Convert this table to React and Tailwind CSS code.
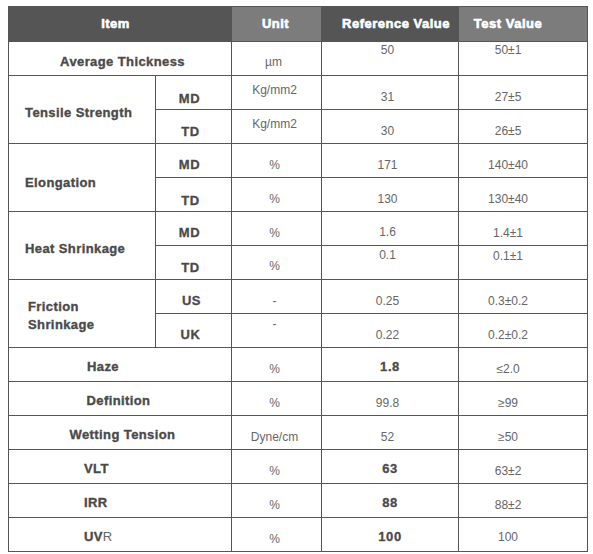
import React from "react";

// Film spec table: header + 15 property rows, 34px each
const td = "border border-[#555] p-0 align-top";
const val = "font-['Liberation_Sans',Arial,sans-serif] text-[12px] leading-[14px] text-[#666] text-center";
const lab = "font-['Liberation_Sans',Arial,sans-serif] font-bold text-[13px] leading-[14px] tracking-[0.4px] text-[#4a4a4a] [-webkit-text-stroke:0.35px_#4a4a4a]";
const bold = "font-['Liberation_Sans',Arial,sans-serif] font-bold text-[13px] leading-[14px] tracking-[0.6px] text-[#4a4a4a] [-webkit-text-stroke:0.3px_#4a4a4a] text-center";
const th = "border border-[#555] p-0 align-middle text-white font-['Liberation_Sans',Arial,sans-serif] font-bold text-[13px] leading-[14px] tracking-[0.5px] [-webkit-text-stroke:0.6px_white]";

export default function App() {
  return (
    <div className="bg-white w-[593px] h-[554px] pt-[6px] pl-[8px]">
      <table className="border-collapse table-fixed w-[579px]">
        <colgroup>
          <col className="w-[147px]" />
          <col className="w-[76px]" />
          <col className="w-[90px]" />
          <col className="w-[137px]" />
          <col className="w-[129px]" />
        </colgroup>
        <tbody>
          <tr className="h-[35px]">
            <th colSpan={2} className={th + " bg-[#555] pr-[9px]"}>Item</th>
            <th className={th + " bg-[#7c7c7c] pr-[2px]"}>Unit</th>
            <th className={th + " bg-[#555] pl-[12px]"}>Reference Value</th>
            <th className={th + " bg-[#7c7c7c] pr-[30px]"}>Test Value</th>
          </tr>

          <tr className="h-[34px]">
            <td colSpan={2} className={td}><div className={lab + " text-center pt-[13px] pl-[5px]"}>Average Thickness</div></td>
            <td className={td}><div className={val + " pt-[13px] pr-[6px]"}>µm</div></td>
            <td className={td}><div className={val + " pt-[1px] pr-[5px]"}>50</div></td>
            <td className={td}><div className={val + " pt-[1px] pr-[30px]"}>50±1</div></td>
          </tr>

          <tr className="h-[34px]">
            <td rowSpan={2} className={td}><div className={lab + " pt-[30px] pl-[16px]"}>Tensile Strength</div></td>
            <td className={td}><div className={bold + " pt-[16px] pr-[8px]"}>MD</div></td>
            <td className={td}><div className={val + " pt-[7px] pr-[4px]"}>Kg/mm2</div></td>
            <td className={td}><div className={val + " pt-[14px] pr-[5px]"}>31</div></td>
            <td className={td}><div className={val + " pt-[14px] pr-[30px]"}>27±5</div></td>
          </tr>
          <tr className="h-[34px]">
            <td className={td}><div className={bold + " pt-[15px] pr-[6px]"}>TD</div></td>
            <td className={td}><div className={val + " pt-[7px] pr-[4px]"}>Kg/mm2</div></td>
            <td className={td}><div className={val + " pt-[14px] pr-[5px]"}>30</div></td>
            <td className={td}><div className={val + " pt-[14px] pr-[30px]"}>26±5</div></td>
          </tr>

          <tr className="h-[34px]">
            <td rowSpan={2} className={td}><div className={lab + " pt-[32px] pl-[16px]"}>Elongation</div></td>
            <td className={td}><div className={bold + " pt-[14px] pr-[8px]"}>MD</div></td>
            <td className={td}><div className={val + " pt-[14px] pr-[4px]"}>%</div></td>
            <td className={td}><div className={val + " pt-[14px] pr-[5px]"}>171</div></td>
            <td className={td}><div className={val + " pt-[14px] pr-[30px]"}>140±40</div></td>
          </tr>
          <tr className="h-[34px]">
            <td className={td}><div className={bold + " pt-[16px] pr-[6px]"}>TD</div></td>
            <td className={td}><div className={val + " pt-[14px] pr-[4px]"}>%</div></td>
            <td className={td}><div className={val + " pt-[14px] pr-[5px]"}>130</div></td>
            <td className={td}><div className={val + " pt-[14px] pr-[30px]"}>130±40</div></td>
          </tr>

          <tr className="h-[34px]">
            <td rowSpan={2} className={td}><div className={lab + " pt-[30px] pl-[16px]"}>Heat Shrinkage</div></td>
            <td className={td}><div className={bold + " pt-[14px] pr-[8px]"}>MD</div></td>
            <td className={td}><div className={val + " pt-[14px] pr-[4px]"}>%</div></td>
            <td className={td}><div className={val + " pt-[13px] pr-[5px]"}>1.6</div></td>
            <td className={td}><div className={val + " pt-[14px] pr-[30px]"}>1.4±1</div></td>
          </tr>
          <tr className="h-[34px]">
            <td className={td}><div className={bold + " pt-[15px] pr-[6px]"}>TD</div></td>
            <td className={td}><div className={val + " pt-[13px] pr-[4px]"}>%</div></td>
            <td className={td}><div className={val + " pt-[2px] pr-[5px]"}>0.1</div></td>
            <td className={td}><div className={val + " pt-[3px] pr-[30px]"}>0.1±1</div></td>
          </tr>

          <tr className="h-[34px]">
            <td rowSpan={2} className={td}>
              <div className={lab + " pt-[18px] pl-[19px] leading-[18px]"}>
                Friction
                <br />
                Shrinkage
              </div>
            </td>
            <td className={td}><div className={bold + " pt-[14px] pr-[4px]"}>US</div></td>
            <td className={td}><div className={val + " pt-[14px] pr-[4px]"}>-</div></td>
            <td className={td}><div className={val + " pt-[14px] pr-[5px]"}>0.25</div></td>
            <td className={td}><div className={val + " pt-[14px] pr-[30px]"}>0.3±0.2</div></td>
          </tr>
          <tr className="h-[34px]">
            <td className={td}><div className={bold + " pt-[14px] pr-[6px]"}>UK</div></td>
            <td className={td}><div className={val + " pt-[3px] pr-[4px]"}>-</div></td>
            <td className={td}><div className={val + " pt-[14px] pr-[5px]"}>0.22</div></td>
            <td className={td}><div className={val + " pt-[14px] pr-[30px]"}>0.2±0.2</div></td>
          </tr>

          <tr className="h-[34px]">
            <td colSpan={2} className={td}><div className={lab + " pt-[12px] pl-[78px]"}>Haze</div></td>
            <td className={td}><div className={val + " pt-[14px] pr-[4px]"}>%</div></td>
            <td className={td}><div className={bold + " pt-[12px] pr-[0px]"}>1.8</div></td>
            <td className={td}><div className={val + " pt-[14px] pr-[30px]"}>≤2.0</div></td>
          </tr>
          <tr className="h-[34px]">
            <td colSpan={2} className={td}><div className={lab + " text-center pt-[12px] pr-[3px]"}>Definition</div></td>
            <td className={td}><div className={val + " pt-[14px] pr-[4px]"}>%</div></td>
            <td className={td}><div className={val + " pt-[14px] pr-[5px]"}>99.8</div></td>
            <td className={td}><div className={val + " pt-[14px] pr-[30px]"}>≥99</div></td>
          </tr>
          <tr className="h-[34px]">
            <td colSpan={2} className={td}><div className={lab + " text-center pt-[12px] pl-[5px]"}>Wetting Tension</div></td>
            <td className={td}><div className={val + " pt-[14px] pr-[4px]"}>Dyne/cm</div></td>
            <td className={td}><div className={val + " pt-[14px] pr-[5px]"}>52</div></td>
            <td className={td}><div className={val + " pt-[14px] pr-[30px]"}>≥50</div></td>
          </tr>
          <tr className="h-[34px]">
            <td colSpan={2} className={td}><div className={lab + " pt-[12px] pl-[75px]"}>VLT</div></td>
            <td className={td}><div className={val + " pt-[14px] pr-[4px]"}>%</div></td>
            <td className={td}><div className={bold + " pt-[12px] pr-[0px]"}>63</div></td>
            <td className={td}><div className={val + " pt-[14px] pr-[30px]"}>63±2</div></td>
          </tr>
          <tr className="h-[34px]">
            <td colSpan={2} className={td}><div className={lab + " pt-[12px] pl-[75px]"}>IRR</div></td>
            <td className={td}><div className={val + " pt-[14px] pr-[4px]"}>%</div></td>
            <td className={td}><div className={bold + " pt-[12px] pr-[0px]"}>88</div></td>
            <td className={td}><div className={val + " pt-[14px] pr-[30px]"}>88±2</div></td>
          </tr>
          <tr className="h-[34px]">
            <td colSpan={2} className={td}>
              <div className={lab + " pt-[12px] pl-[75px]"}>
                UV<span className="font-normal text-[#666] [-webkit-text-stroke:0px]">R</span>
              </div>
            </td>
            <td className={td}><div className={val + " pt-[14px] pr-[4px]"}>%</div></td>
            <td className={td}><div className={bold + " pt-[12px] pr-[0px]"}>100</div></td>
            <td className={td}><div className={val + " pt-[12px] pr-[30px]"}>100</div></td>
          </tr>
        </tbody>
      </table>
    </div>
  );
}
